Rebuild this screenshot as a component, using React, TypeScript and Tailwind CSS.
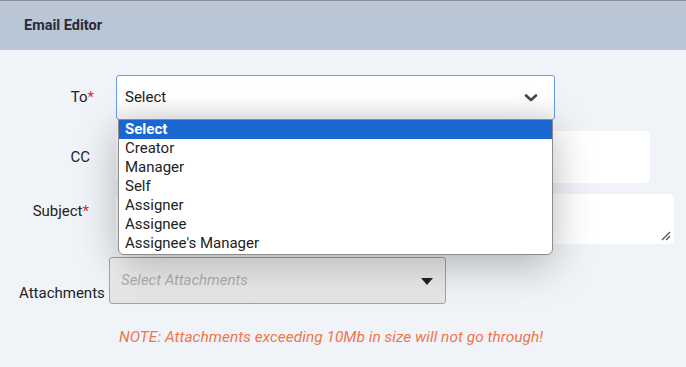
import { useState } from "react";

const OPTIONS = ["Select", "Creator", "Manager", "Self", "Assigner", "Assignee", "Assignee's Manager"];

function Chevron() {
  return (
    <svg width="14" height="10" viewBox="0 0 14 10" className="text-[#444]">
      <polyline points="2,2.5 7,7 12,2.5" fill="none" stroke="currentColor" strokeWidth="2.6" strokeLinecap="round" strokeLinejoin="round" />
    </svg>
  );
}

export default function App() {
  const [selected] = useState("Select");

  return (
    <div className="w-[686px] h-[367px] overflow-hidden bg-[#f0f4f9] font-['Roboto',sans-serif] text-[#222]">
      {/* Header */}
      <div className="h-[50px] border-t border-[#8a8f96] bg-[#b9c6d6] flex items-center px-6">
        <span className="text-[14.5px] font-bold text-[#2b2b33]">Email Editor</span>
      </div>

      {/* Form */}
      <div className="pt-[25px] flex flex-col text-[15px]">
        {/* To */}
        <div className="flex items-center h-[45px]">
          <label className="w-[116px] pr-[22px] text-right">
            To<span className="text-[#e0282e]">*</span>
          </label>
          <div className="relative w-[439px]">
            <div className="h-[45px] rounded-[3px] border border-[#6a9be0] bg-gradient-to-b from-white via-white to-[#f3f3f3] flex items-center justify-between pl-[8px] pr-[16px]">
              <span>{selected}</span>
              <Chevron />
            </div>
            {/* Open list */}
            <ul className="absolute left-[2px] top-[44px] z-10 w-[435px] bg-white border border-[#8c8c8c] rounded-b-[6px] shadow-[0_10px_40px_rgba(0,0,0,0.28)] leading-[19px] pb-[1px]">
              {OPTIONS.map((o) => (
                <li
                  key={o}
                  className={
                    o === selected
                      ? "bg-[#1a67d2] text-white font-bold px-[6px] h-[19px]"
                      : "px-[6px] h-[19px] text-[#222]"
                  }
                >
                  {o}
                </li>
              ))}
            </ul>
          </div>
        </div>

        {/* CC */}
        <div className="flex items-center mt-[11px]">
          <label className="w-[116px] pr-[26px] text-right">CC</label>
          <div className="w-[534px] h-[52px] rounded-[5px] bg-white" />
        </div>

        {/* Subject */}
        <div className="flex items-start mt-[11px]">
          <label className="w-[116px] pr-[27px] pt-[6px] text-right">
            Subject<span className="text-[#e0282e]">*</span>
          </label>
          <div className="relative w-[558px] h-[50px] rounded-[5px] bg-white">
            <svg width="10" height="10" viewBox="0 0 10 10" className="absolute right-[3px] bottom-[3px]">
              <line x1="1" y1="9" x2="9" y2="1" stroke="#555" strokeWidth="1.2" />
              <line x1="5" y1="9" x2="9" y2="5" stroke="#555" strokeWidth="1.2" />
            </svg>
          </div>
        </div>

        {/* Attachments */}
        <div className="flex items-center mt-[13px]">
          <label className="w-[109px] pl-[19px] pt-[25px]">Attachments</label>
          <div className="w-[337px] h-[47px] rounded-[3px] border border-[#a3a3a3] bg-gradient-to-b from-[#f2f2f2] to-[#e4e4e4] flex items-start justify-between pl-[11px] pr-[12px] pt-[11px]">
            <span className="italic text-[#b0b0b0]">Select Attachments</span>
            <svg width="12" height="7" viewBox="0 0 12 7" className="mt-[9px]">
              <polygon points="0,0 12,0 6,7" fill="#222" />
            </svg>
          </div>
        </div>

        {/* Note */}
        <p className="mt-[21px] pl-[119px] italic text-[15.5px] text-[#f2744a]">
          NOTE: Attachments exceeding 10Mb in size will not go through!
        </p>
      </div>
    </div>
  );
}
